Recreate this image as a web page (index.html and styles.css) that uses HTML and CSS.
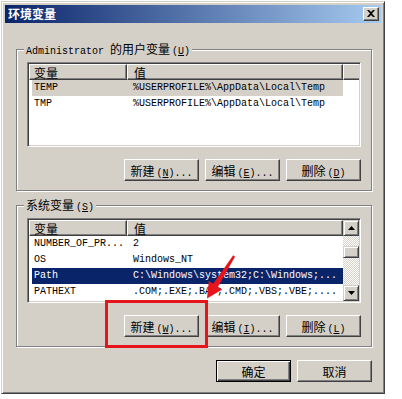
FILE: index.html
```html
<!DOCTYPE html>
<html lang="zh-CN">
<head>
  <meta charset="UTF-8">
  <title>环境变量</title>
  <link rel="stylesheet" href="styles.css">
</head>
<body>
  <div class="window">
    <div class="titlebar">
      <span class="title">环境变量</span>
      <button class="close">
        <svg width="8" height="7" viewBox="0 0 8 7"><path d="M0 0h2l2 2 2-2h2L5 3.5 8 7H6L4 5 2 7H0l3-3.5z" fill="#000"/></svg>
      </button>
    </div>

    <div class="body">
      <!-- 用户变量 -->
      <div class="group">
        <span class="legend"><span class="mono">Administrator </span>的用户变量<span class="mono key">(<u>U</u>)</span></span>
        <div class="list">
          <div class="list-main">
            <div class="list-head">
              <div class="hcell h1">变量</div>
              <div class="hcell h2">值</div>
              <div class="hcell h3"></div>
            </div>
            <div class="row inactive"><span class="c1">TEMP</span><span class="c2">%USERPROFILE%\AppData\Local\Temp</span></div>
            <div class="row"><span class="c1">TMP</span><span class="c2">%USERPROFILE%\AppData\Local\Temp</span></div>
          </div>
        </div>
        <div class="btns">
          <button class="btn">新建<span class="mono key">(<u>N</u>)...</span></button>
          <button class="btn">编辑<span class="mono key">(<u>E</u>)...</span></button>
          <button class="btn">删除<span class="mono key">(<u>D</u>)</span></button>
        </div>
      </div>

      <!-- 系统变量 -->
      <div class="group sys">
        <span class="legend">系统变量<span class="mono key">(<u>S</u>)</span></span>
        <div class="list">
          <div class="list-main">
            <div class="list-head">
              <div class="hcell h1">变量</div>
              <div class="hcell h2">值</div>
            </div>
            <div class="row"><span class="c1">NUMBER_OF_PR...</span><span class="c2">2</span></div>
            <div class="row"><span class="c1">OS</span><span class="c2">Windows_NT</span></div>
            <div class="row active"><span class="c1">Path</span><span class="c2">C:\Windows\system32;C:\Windows;...</span></div>
            <div class="row"><span class="c1">PATHEXT</span><span class="c2">.COM;.EXE;.BAT;.CMD;.VBS;.VBE;....</span></div>
          </div>
          <div class="scrollbar">
            <div class="sb-btn"><svg width="7" height="4" viewBox="0 0 7 4"><path d="M3.5 0L7 4H0z" fill="#000"/></svg></div>
            <div class="sb-track top"></div>
            <div class="sb-thumb"></div>
            <div class="sb-track rest"></div>
            <div class="sb-btn"><svg width="7" height="4" viewBox="0 0 7 4"><path d="M0 0h7L3.5 4z" fill="#000"/></svg></div>
          </div>
        </div>
        <div class="btns">
          <button class="btn">新建<span class="mono key">(<u>W</u>)...</span></button>
          <button class="btn">编辑<span class="mono key">(<u>I</u>)...</span></button>
          <button class="btn">删除<span class="mono key">(<u>L</u>)</span></button>
        </div>
      </div>

      <div class="footer">
        <button class="btn default">确定</button>
        <button class="btn">取消</button>
      </div>
    </div>
  </div>

  <!-- 标注 -->
  <div class="mark"></div>
  <svg class="arrow" width="402" height="399" viewBox="0 0 402 399">
    <polygon points="233.2,255.2 213.2,283.7 208.8,281 207,298.5 222.2,289.4 218,286.8 235,256.8" fill="#e8141c"/>
  </svg>
</body>
</html>
```

FILE: styles.css
```css
body {
  margin: 0;
  background: #fff;
  font-family: "Noto Sans CJK SC", sans-serif;
  font-size: 12px;
  color: #000;
}

.mono {
  font-family: "Liberation Mono", monospace;
  font-size: 10px;
}

.key {
  margin-left: 2px;
}

u {
  text-underline-offset: 1px;
}

.window {
  box-sizing: border-box;
  width: 384px;
  height: 393px;
  margin: 1px;
  padding: 3px;
  background: #d4d0c8;
  border: 1px solid;
  border-color: #d4d0c8 #404040 #404040 #d4d0c8;
  box-shadow: inset 1px 1px #fff, inset -1px -1px #808080;
}

.titlebar {
  height: 18px;
  display: flex;
  align-items: center;
  padding: 0 2px 0 3px;
  background: linear-gradient(to right, #0a246a, #a6caf0);
}

.title {
  color: #fff;
  font-weight: bold;
  font-size: 12px;
  line-height: 18px;
}

.close {
  margin-left: auto;
  width: 16px;
  height: 14px;
  padding: 0 1px 1px 0;
  display: flex;
  align-items: center;
  justify-content: center;
  background: #d4d0c8;
  border: 1px solid;
  border-color: #fff #404040 #404040 #fff;
  box-shadow: inset -1px -1px #808080;
}

.body {
  padding: 0 9px 0 11px;
}

.group {
  position: relative;
  margin-top: 26px;
  padding: 12px 10px 9px;
  border: 1px solid #808080;
  box-shadow: inset 1px 1px #fff, 1px 1px #fff;
}

.group.sys {
  margin-top: 14px;
}

.legend {
  position: absolute;
  top: -9px;
  left: 7px;
  padding: 0 2px;
  background: #d4d0c8;
  line-height: 16px;
}

.list {
  display: flex;
  height: 85px;
  box-sizing: border-box;
  background: #fff;
  border: 1px solid;
  border-color: #808080 #fff #fff #808080;
  box-shadow: inset 1px 1px #404040, inset -1px -1px #d4d0c8;
  padding: 1px;
  overflow: hidden;
}

.list-main {
  flex: 1;
  overflow: hidden;
}

.list-head {
  display: flex;
  height: 16px;
}

.hcell {
  box-sizing: border-box;
  height: 16px;
  line-height: 15px;
  padding-left: 4px;
  background: #d4d0c8;
  border-top: 1px solid #fff;
  border-left: 1px solid #fff;
  border-right: 1px solid #404040;
  border-bottom: 1px solid #404040;
  box-shadow: inset -1px -1px #808080;
}

.h1 {
  width: 98px;
}

.h2 {
  width: 216px;
  padding-left: 6px;
}

.h3 {
  flex: 1;
  border-right: none;
  box-shadow: inset 0 -1px #808080;
}

.row {
  display: flex;
  height: 16px;
  line-height: 16px;
  margin-left: 3px;
  width: 311px;
  font-family: "Liberation Mono", monospace;
  font-size: 10px;
  white-space: nowrap;
}

.row .c1 {
  width: 99px;
  padding-left: 2px;
}

.row.inactive {
  background: #d4d0c8;
}

.row.active {
  background: #0a246a;
  color: #fff;
}

.scrollbar {
  width: 16px;
  display: flex;
  flex-direction: column;
}

.sb-btn,
.sb-thumb {
  box-sizing: border-box;
  height: 16px;
  display: flex;
  align-items: center;
  justify-content: center;
  background: #d4d0c8;
  border: 1px solid;
  border-color: #d4d0c8 #404040 #404040 #d4d0c8;
  box-shadow: inset 1px 1px #fff, inset -1px -1px #808080;
}

.sb-thumb {
  height: 12px;
}

.sb-track {
  background: repeating-conic-gradient(#fff 0 25%, #d4d0c8 0 50%) 0 0 / 2px 2px;
}

.sb-track.top {
  height: 10px;
}

.sb-track.rest {
  flex: 1;
}

.btns {
  display: flex;
  justify-content: flex-end;
  gap: 6px;
  margin-top: 12px;
}

.btn {
  box-sizing: border-box;
  width: 75px;
  height: 22px;
  padding: 0;
  font-family: "Noto Sans CJK SC", sans-serif;
  font-size: 12px;
  color: #000;
  background: #d4d0c8;
  border: 1px solid;
  border-color: #fff #404040 #404040 #fff;
  box-shadow: inset -1px -1px #808080;
}

.btn.default {
  border-color: #000;
  box-shadow: inset 1px 1px #fff, inset -1px -1px #404040, inset -2px -2px #808080;
}

.footer {
  display: flex;
  justify-content: flex-end;
  gap: 6px;
  margin-top: 13px;
}

.mark {
  position: absolute;
  left: 105px;
  top: 300px;
  width: 103px;
  height: 48px;
  box-sizing: border-box;
  border: 3px solid #e8141c;
}

.arrow {
  position: absolute;
  left: 0;
  top: 0;
  pointer-events: none;
}
```
